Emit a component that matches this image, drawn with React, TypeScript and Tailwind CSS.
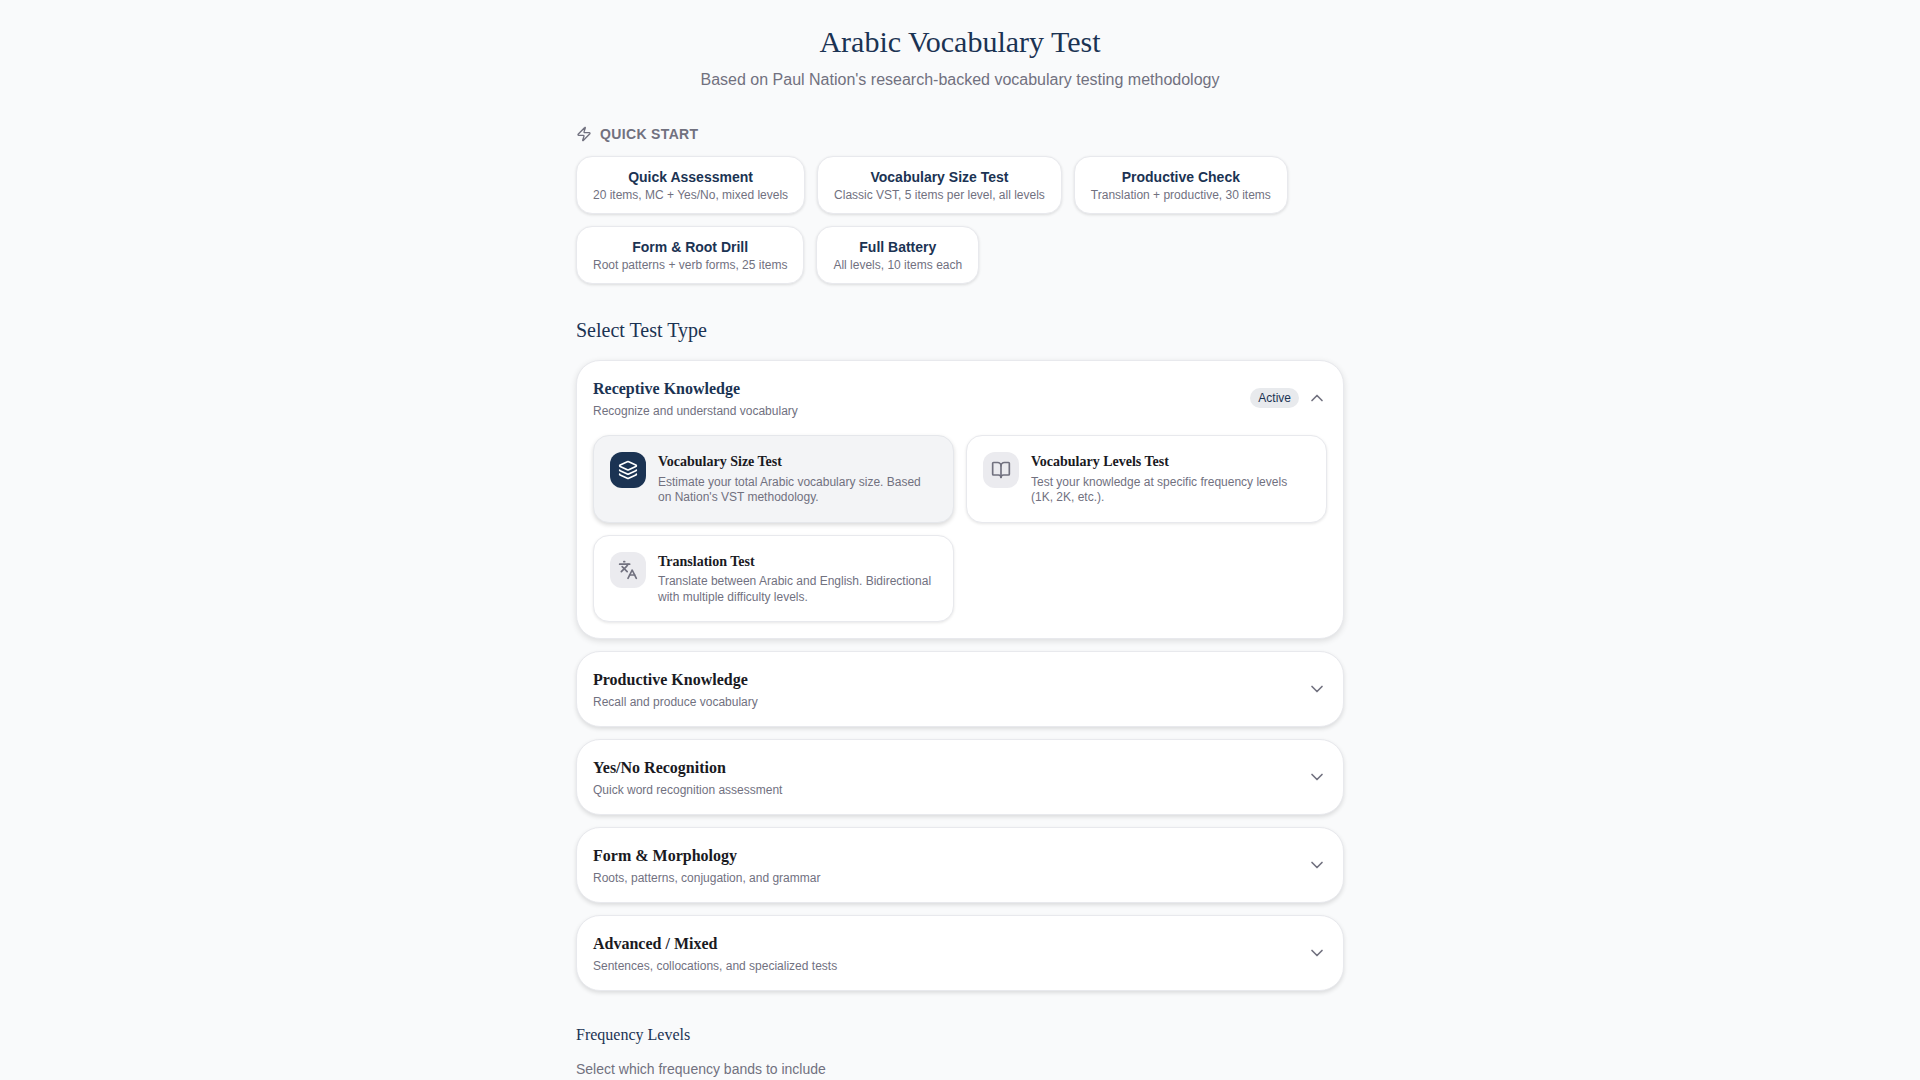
import { BookOpen, ChevronDown, ChevronUp, Languages, Layers, Zap } from 'lucide-react';

const presets = [
  { title: 'Quick Assessment', sub: '20 items, MC + Yes/No, mixed levels' },
  { title: 'Vocabulary Size Test', sub: 'Classic VST, 5 items per level, all levels' },
  { title: 'Productive Check', sub: 'Translation + productive, 30 items' },
  { title: 'Form & Root Drill', sub: 'Root patterns + verb forms, 25 items' },
  { title: 'Full Battery', sub: 'All levels, 10 items each' },
];

const tests = [
  { title: 'Vocabulary Size Test', desc: "Estimate your total Arabic vocabulary size. Based on Nation's VST methodology.", icon: Layers, active: true },
  { title: 'Vocabulary Levels Test', desc: 'Test your knowledge at specific frequency levels (1K, 2K, etc.).', icon: BookOpen, active: false },
  { title: 'Translation Test', desc: 'Translate between Arabic and English. Bidirectional with multiple difficulty levels.', icon: Languages, active: false },
];

const sections = [
  { title: 'Productive Knowledge', sub: 'Recall and produce vocabulary' },
  { title: 'Yes/No Recognition', sub: 'Quick word recognition assessment' },
  { title: 'Form & Morphology', sub: 'Roots, patterns, conjugation, and grammar' },
  { title: 'Advanced / Mixed', sub: 'Sentences, collocations, and specialized tests' },
];

const serif = "font-['Liberation_Serif',serif]";

export default function App() {
  return (
    <div className="min-h-screen bg-[#f9fafb] font-['Liberation_Sans',sans-serif] text-[#1a1a1f]">
      <div className="max-w-3xl mx-auto pt-6 pb-6">
        {/* Header */}
        <div className="text-center mb-8">
          <h1 className={`${serif} text-3xl leading-9 text-[#1b3353] mb-2`}>Arabic Vocabulary Test</h1>
          <p className="text-base leading-6 text-[#71717f]">Based on Paul Nation's research-backed vocabulary testing methodology</p>
        </div>

        {/* Quick start */}
        <div className="mb-8">
          <div className="flex items-center gap-2 mb-3 h-5">
            <Zap className="w-4 h-4 text-[#71717f]" />
            <span className="text-sm font-semibold uppercase tracking-wide text-[#71717f]">Quick Start</span>
          </div>
          <div className="flex flex-wrap gap-3">
            {presets.map((p) => (
              <div key={p.title} className="px-4 py-2.5 bg-white border border-[#e8e9ed] rounded-2xl text-center shadow-[0_1px_3px_rgba(0,0,0,0.12)]">
                <div className="text-sm font-semibold leading-5 text-[#1b3353]">{p.title}</div>
                <div className="text-xs leading-4 text-[#71717f]">{p.sub}</div>
              </div>
            ))}
          </div>
        </div>

        {/* Test type */}
        <h2 className={`${serif} text-xl leading-7 text-[#1b3353] mb-4`}>Select Test Type</h2>
        <div className="flex flex-col gap-3">
          <div className="bg-white border border-[#e8e9ed] rounded-3xl p-4 shadow-[0_2px_6px_rgba(0,0,0,0.12)]">
            <div className="flex items-center justify-between mb-4">
              <div>
                <div className={`${serif} text-base leading-6 font-semibold text-[#1b3353]`}>Receptive Knowledge</div>
                <div className="text-xs leading-4 mt-0.5 text-[#71717f]">Recognize and understand vocabulary</div>
              </div>
              <div className="flex items-center gap-2">
                <span className="px-2 py-0.5 rounded-full bg-[#e8eaed] text-xs leading-4 text-[#1b3353]">Active</span>
                <ChevronUp className="w-5 h-5 text-[#71717f]" />
              </div>
            </div>
            <div className="grid grid-cols-2 gap-3">
              {tests.map((t) => (
                <div
                  key={t.title}
                  className={`flex gap-3 p-4 rounded-2xl border ${t.active ? 'bg-[#f3f4f6] border-[#e5e7eb] shadow-[0_2px_4px_rgba(0,0,0,0.15)]' : 'bg-white border-[#e8e9ed] shadow-[0_1px_3px_rgba(0,0,0,0.1)]'}`}
                >
                  <div className={`w-9 h-9 shrink-0 rounded-xl flex items-center justify-center ${t.active ? 'bg-[#1b3353] text-white' : 'bg-[#ebebef] text-[#71717f]'}`}>
                    <t.icon className="w-5 h-5" />
                  </div>
                  <div>
                    <div className={`${serif} text-sm leading-5 font-semibold text-[#1a1a1f]`}>{t.title}</div>
                    <div className="text-xs leading-[15.6px] mt-[2.5px] text-[#71717f]">{t.desc}</div>
                  </div>
                </div>
              ))}
            </div>
          </div>

          {sections.map((s) => (
            <div key={s.title} className="flex items-center justify-between bg-white border border-[#e8e9ed] rounded-3xl p-4 shadow-[0_2px_4px_rgba(0,0,0,0.12)]">
              <div>
                <div className={`${serif} text-base leading-6 font-semibold text-[#1a1a1f]`}>{s.title}</div>
                <div className="text-xs leading-4 mt-0.5 text-[#71717f]">{s.sub}</div>
              </div>
              <ChevronDown className="w-5 h-5 text-[#71717f]" />
            </div>
          ))}
        </div>

        {/* Frequency levels */}
        <div className="mt-8">
          <h3 className={`${serif} text-base leading-6 text-[#1b3353] mb-3`}>Frequency Levels</h3>
          <p className="text-sm leading-5 text-[#71717f]">Select which frequency bands to include</p>
        </div>
      </div>
    </div>
  );
}
